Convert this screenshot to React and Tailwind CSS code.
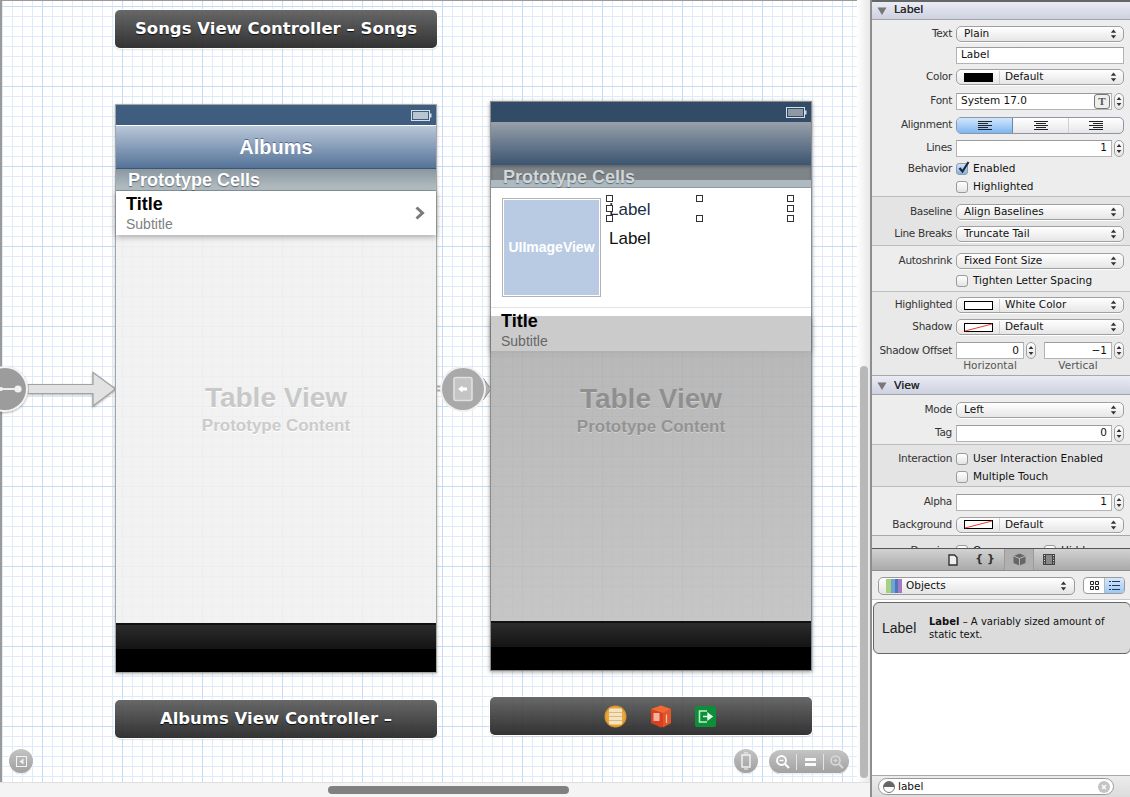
import React from 'react';

const lucida = "font-['DejaVu_Sans',sans-serif]";
const helv = "font-['Liberation_Sans',Arial,sans-serif]";

/* ── Small inspector controls ───────────────────────────── */
const UpDown = () => (
  <svg width="7" height="10" viewBox="0 0 7 10" className="shrink-0">
    <path d="M3.5 0.5 L6.2 3.8 H0.8 Z" fill="#333" />
    <path d="M3.5 9.5 L6.2 6.2 H0.8 Z" fill="#333" />
  </svg>
);

const Select = ({ children, className = 'w-[168px]' }) => (
  <div className={`${className} h-[16px] flex items-center pl-[7px] pr-[6px] rounded-[5px] border border-[#a0a0a0] bg-gradient-to-b from-white to-[#e6e6e6] shadow-[0_1px_0_#fff] text-[#111]`}>
    <div className="flex-1 flex items-center min-w-0 whitespace-nowrap">{children}</div>
    <UpDown />
  </div>
);

const Swatch = ({ kind }) => (
  <svg width="29" height="9" viewBox="0 0 29 9" className="shrink-0 mr-[6px]">
    {kind === 'black' && <rect width="29" height="9" fill="#000" />}
    {kind !== 'black' && <rect x="0.5" y="0.5" width="28" height="8" fill="#fff" stroke="#000" />}
    {kind === 'none' && <line x1="1" y1="8" x2="28" y2="1" stroke="#f03a2e" strokeWidth="1" />}
  </svg>
);

const ColorSelect = ({ kind, label }) => (
  <Select>
    <Swatch kind={kind} />
    <span className="w-px h-[13px] bg-[#cfcfcf] mr-[5px]" />
    {label}
  </Select>
);

const Stepper = () => (
  <div className="w-[10px] h-[17px] ml-[2px] rounded-[5px] border border-[#a0a0a0] bg-gradient-to-b from-white to-[#e6e6e6] flex items-center justify-center shrink-0">
    <svg width="6" height="11" viewBox="0 0 6 11">
      <path d="M3 1 L5.4 4 H0.6 Z" fill="#333" />
      <path d="M3 10 L5.4 7 H0.6 Z" fill="#333" />
    </svg>
  </div>
);

const Field = ({ children, right, className = 'w-[156px]' }) => (
  <div className={`${className} h-[17px] flex items-center px-[4px] bg-white border border-[#b4b4b4] border-t-[#9c9c9c] text-[#111] ${right ? 'justify-end' : ''}`}>
    {children}
  </div>
);

const Check = ({ checked, label, className = '' }) => (
  <div className={`flex items-center gap-[5px] ${className}`}>
    <div className={`relative w-[12px] h-[12px] rounded-[3px] border border-[#9a9a9a] ${checked ? 'bg-gradient-to-b from-[#cfe3fa] to-[#7fb2ec]' : 'bg-gradient-to-b from-white to-[#e4e4e4]'}`}>
      {checked && (
        <svg width="14" height="14" viewBox="0 0 14 14" className="absolute left-[0px] top-[-4px]">
          <path d="M2.5 8 L5.5 11.5 L11.5 2" fill="none" stroke="#1a2a3c" strokeWidth="2.2" />
        </svg>
      )}
    </div>
    <span className="text-[#111]">{label}</span>
  </div>
);

const Row = ({ label, className, children }) => (
  <div className={`flex items-center ${className}`}>
    <div className="w-[80px] mr-[4px] text-right text-[#333] whitespace-nowrap shrink-0 tracking-[-0.3px] flex justify-end">{label}</div>
    {children}
  </div>
);

const AlignIcon = ({ mode }) => {
  const short = mode === 'left' ? 'M0 2.5h10M0 6.5h10' : mode === 'center' ? 'M2 2.5h10M2 6.5h10' : 'M4 2.5h10M4 6.5h10';
  return (
    <svg width="14" height="9" viewBox="0 0 14 9">
      <path d="M0 0.5h14M0 4.5h14M0 8.5h14" stroke="#222" strokeWidth="1" />
      <path d={short} stroke="#222" strokeWidth="1" />
    </svg>
  );
};

const SectionHeader = ({ title, className }) => (
  <div className={`flex items-center gap-[7px] pl-[5px] bg-gradient-to-b from-[#eaecf5] to-[#cdd1e0] border-b border-[#a4a4a4] ${className}`}>
    <svg width="10" height="8" viewBox="0 0 10 8"><path d="M0.5 0.5 H9.5 L5 8 Z" fill="#777" /></svg>
    <span className="text-[#2a2a2a] text-[11px] tracking-[-0.1px] [text-shadow:0_0_0.4px_#333]">{title}</span>
  </div>
);

/* ── Inspector pane ─────────────────────────────────────── */
const Inspector = () => (
  <div className={`${lucida} w-[260px] h-[797px] shrink-0 flex flex-col text-[10.5px] border-l-2 border-[#8e8e8e] bg-[#ededed]`}>
    <div className="h-[548px] overflow-hidden border-t-2 border-[#666] shrink-0">
      <SectionHeader title="Label" className="h-[18px]" />

      <div className="pt-[4px] h-[177px] border-b border-[#bdbdbd] bg-[#ededed]">
        <Row label="Text" className="h-[20px]"><Select>Plain</Select></Row>
        <Row label="" className="h-[21px]"><div className="mt-px"><Field className="w-[168px]">Label</Field></div></Row>
        <Row label="Color" className="h-[24px]"><ColorSelect kind="black" label="Default" /></Row>
        <Row label="Font" className="h-[24px]">
          <Field className="w-[156px]">
            <span className="flex-1">System 17.0</span>
            <span className="w-[16px] h-[15px] -mr-[3px] rounded-[3px] border border-[#777] bg-[#eee] flex items-center justify-center font-['Liberation_Serif',serif] font-bold text-[11px] text-[#555]">T</span>
          </Field>
          <Stepper />
        </Row>
        <Row label="Alignment" className="h-[24px]">
          <div className="w-[168px] h-[17px] flex rounded-[5px] border border-[#8c96a8] overflow-hidden bg-gradient-to-b from-white to-[#e6e6e6]">
            <div className="w-[56px] flex items-center justify-center bg-gradient-to-b from-[#d3e6fb] to-[#7db6f0] border-r border-[#6a86ad]"><AlignIcon mode="left" /></div>
            <div className="w-[56px] flex items-center justify-center border-r border-[#d0d0d0]"><AlignIcon mode="center" /></div>
            <div className="flex-1 flex items-center justify-center"><AlignIcon mode="right" /></div>
          </div>
        </Row>
        <Row label="Lines" className="h-[22px]"><Field right>1</Field><Stepper /></Row>
        <Row label="Behavior" className="h-[20px]"><Check checked label="Enabled" /></Row>
        <Row label="" className="h-[16px]"><Check label="Highlighted" /></Row>
      </div>

      <div className="pt-[4px] h-[49px] border-b border-[#bdbdbd] bg-[#e4e4e4]">
        <Row label="Baseline" className="h-[22px]"><Select>Align Baselines</Select></Row>
        <Row label="Line Breaks" className="h-[22px]"><Select>Truncate Tail</Select></Row>
      </div>

      <div className="pt-[4px] h-[46px] border-b border-[#bdbdbd] bg-[#ededed]">
        <Row label="Autoshrink" className="h-[22px]"><Select>Fixed Font Size</Select></Row>
        <Row label="" className="h-[18px]"><Check label="Tighten Letter Spacing" /></Row>
      </div>

      <div className="pt-[2px] h-[84px] border-b border-[#a8a8a8] bg-[#e9e9e9]">
        <Row label="Highlighted" className="h-[22px]"><ColorSelect kind="white" label="White Color" /></Row>
        <Row label="Shadow" className="h-[22px]"><ColorSelect kind="none" label="Default" /></Row>
        <Row label="Shadow Offset" className="h-[21px] mt-[2px]">
          <Field right className="w-[68px]">0</Field><Stepper />
          <div className="w-[8px]" />
          <Field right className="w-[68px]">−1</Field><Stepper />
        </Row>
        <div className="flex h-[12px] -mt-px items-center text-[#555] pl-[84px]">
          <div className="w-[68px] text-center">Horizontal</div>
          <div className="w-[20px]" />
          <div className="w-[68px] text-center">Vertical</div>
        </div>
      </div>

      <SectionHeader title="View" className="h-[19px] pt-[2px]" />

      <div className="pt-[4px] h-[50px] border-b border-[#bdbdbd] bg-[#ededed]">
        <Row label="Mode" className="h-[22px]"><Select>Left</Select></Row>
        <Row label="Tag" className="h-[24px]"><Field right>0</Field><Stepper /></Row>
      </div>

      <div className="pt-[4px] h-[42px] border-b border-[#bdbdbd] bg-[#e4e4e4]">
        <Row label="Interaction" className="h-[19px]"><Check label="User Interaction Enabled" /></Row>
        <Row label="" className="h-[18px]"><Check label="Multiple Touch" /></Row>
      </div>

      <div className="pt-[4px] h-[49px] border-b border-[#a8a8a8] bg-[#ededed]">
        <Row label="Alpha" className="h-[22px]"><Field right>1</Field><Stepper /></Row>
        <Row label="Background" className="h-[23px]"><ColorSelect kind="none" label="Default" /></Row>
      </div>

      <div className="pt-[5px] bg-[#e4e4e4]">
        <Row label="Drawing" className="h-[20px]">
          <Check label="Opaque" className="w-[88px]" />
          <Check label="Hidden" />
        </Row>
      </div>
    </div>

    {/* Library tabs */}
    <div className="h-[23px] shrink-0 border-t border-[#555] bg-gradient-to-b from-[#d2d2d2] to-[#aaaaaa] border-b border-b-[#8f8f8f] flex items-center">
      <div className="w-[90px] flex justify-end pr-[4px]">
        <svg width="10" height="12" viewBox="0 0 10 12"><path d="M1 1 H6.5 L9 3.5 V11 H1 Z" fill="#eee" stroke="#333" strokeWidth="1.4" /></svg>
      </div>
      <div className="w-[42px] pl-[4px] text-center font-bold text-[#333] text-[11px]">{'{ }'}</div>
      <div className="w-[30px] h-[21px] flex items-center justify-center bg-[#b0b0b0] border-x border-[#9a9a9a]">
        <svg width="13" height="13" viewBox="0 0 13 13">
          <path d="M6.5 0.5 L12.5 3 V10 L6.5 12.5 L0.5 10 V3 Z" fill="#666" />
          <path d="M0.5 3 L6.5 5.5 L12.5 3 M6.5 5.5 V12.5" fill="none" stroke="#ccc" strokeWidth="0.8" />
        </svg>
      </div>
      <div className="pl-[9px]">
        <svg width="12" height="11" viewBox="0 0 12 11">
          <rect width="12" height="11" fill="#444" />
          <rect x="3" y="1" width="6" height="9" fill="#888" />
          <path d="M1 1.5h1M1 4h1M1 6.5h1M1 9h1M10 1.5h1M10 4h1M10 6.5h1M10 9h1" stroke="#ddd" />
        </svg>
      </div>
    </div>

    <div className="h-[29px] shrink-0 flex items-center pl-[6px] pt-px border-b border-[#c8c8c8] bg-[#ededed]">
      <div className="w-[197px] h-[18px] flex items-center pl-[7px] pr-[7px] rounded-[5px] border border-[#9a9a9a] bg-gradient-to-b from-white to-[#e4e4e4] text-[#111]">
        <svg width="16" height="14" viewBox="0 0 16 14" className="mr-[4px] shrink-0">
          <rect x="0" y="0" width="5" height="14" fill="#a7d27c" />
          <rect x="5" y="0" width="4" height="14" fill="#6ea4d6" />
          <rect x="9" y="0" width="3" height="14" fill="#4d78b8" />
          <rect x="12" y="0" width="4" height="14" fill="#a878c8" />
        </svg>
        <span className="flex-1">Objects</span>
        <UpDown />
      </div>
      <div className="ml-[8px] w-[42px] h-[17px] flex rounded-[4px] border border-[#9a9a9a] overflow-hidden bg-white">
        <div className="w-[21px] flex items-center justify-center border-r border-[#b8b8b8]">
          <svg width="9" height="9" viewBox="0 0 9 9">
            <path d="M0.5 0.5h3v3h-3zM5.5 0.5h3v3h-3zM0.5 5.5h3v3h-3zM5.5 5.5h3v3h-3z" fill="none" stroke="#222" />
          </svg>
        </div>
        <div className="flex-1 flex items-center justify-center bg-gradient-to-b from-[#d6e8fb] to-[#9cc8f4]">
          <svg width="11" height="9" viewBox="0 0 11 9">
            <path d="M0 0.5h2M3 0.5h8M0 4.5h2M3 4.5h8M0 8.5h2M3 8.5h8" stroke="#1f3a5c" />
          </svg>
        </div>
      </div>
    </div>

    <div className="flex-1 bg-white pt-[2px] pl-[1px]">
      <div className="h-[52px] flex items-center rounded-[6px] border border-[#666] bg-[#dcdcdc] -mr-px">
        <div className={`${helv} w-[55px] pl-[8px] text-[14px] text-[#222]`}>Label</div>
        <div className="text-[10px] leading-[13px] text-[#111] w-[185px]"><b>Label</b> – A variably sized amount of static text.</div>
      </div>
    </div>

    <div className="h-[22px] shrink-0 border-t border-[#a8a8a8] bg-gradient-to-b from-[#ececec] to-[#dcdcdc] flex items-center pl-[6px]">
      <div className="w-[236px] h-[17px] flex items-center pl-[4px] pr-[3px] pt-px rounded-full border border-[#9a9a9a] bg-white text-[#111]">
        <svg width="12" height="12" viewBox="0 0 12 12" className="mr-[3px]">
          <circle cx="6" cy="6" r="5.5" fill="#fff" stroke="#777" />
          <path d="M0.5 6 A5.5 5.5 0 0 1 11.5 6 Z" fill="#666" />
        </svg>
        <span className="flex-1">label</span>
        <svg width="12" height="12" viewBox="0 0 12 12">
          <circle cx="6" cy="6" r="6" fill="#c4c4c4" />
          <path d="M4 4 L8 8 M8 4 L4 8" stroke="#fff" strokeWidth="1.4" />
        </svg>
      </div>
    </div>
  </div>
);

/* ── Storyboard pieces ──────────────────────────────────── */
const Battery = ({ fill }) => (
  <svg width="21" height="11" viewBox="0 0 21 11" className="shrink-0">
    <rect x="0.5" y="0.5" width="18" height="10" fill="none" stroke="#d8dee6" />
    <rect x="2" y="2" width="15" height="7" fill={fill} />
    <rect x="19" y="3.5" width="1.5" height="4" fill="#d8dee6" />
  </svg>
);

const TitleBar = ({ className, children }) => (
  <div className={`absolute ${className} h-[38px] rounded-[5px] bg-gradient-to-b from-[rgba(88,88,88,0.9)] to-[rgba(34,34,34,0.92)] shadow-[0_0_0_1px_#fff,0_1px_2px_rgba(0,0,0,0.35)] flex items-center justify-center`}>
    {children}
  </div>
);

const barTitle = `${lucida} font-bold text-white text-[16.5px] pt-px [text-shadow:0_1px_1px_rgba(0,0,0,0.8)] whitespace-nowrap`;

const Handle = ({ className }) => (
  <div className={`absolute ${className} w-[7px] h-[7px] border border-[#333] bg-white`} />
);

const TabBar = () => (
  <div className="h-[49px] shrink-0 bg-black border-t-2 border-[#111]">
    <div className="h-[24px] bg-gradient-to-b from-[#2c2c2c] to-[#141414]" />
  </div>
);

const AlbumsScene = () => (
  <div className={`${helv} absolute left-[115px] top-[104px] w-[322px] h-[569px] flex flex-col border border-[#a6a6a6] shadow-[0_1px_3px_rgba(0,0,0,0.25)]`}>
    <div className="h-[20px] shrink-0 flex items-center justify-end pr-[4px] bg-[#3f5e7f]"><Battery fill="#b9c5d3" /></div>
    <div className="h-[44px] shrink-0 border-t border-white bg-gradient-to-b from-[#bac8d9] to-[#557398] border-b border-b-[#3d5674] flex items-center justify-center">
      <span className="text-white font-bold text-[20px] [text-shadow:0_-1px_0_rgba(40,60,90,0.6)]">Albums</span>
    </div>
    <div className="h-[22px] shrink-0 flex items-center pl-[12px] pt-[2px] bg-gradient-to-b from-[#8b979f] to-[#b6c1c6] border-b border-[#8b97a2]">
      <span className="text-white font-bold text-[18px] [text-shadow:0_1px_1px_rgba(60,70,80,0.7)]">Prototype Cells</span>
    </div>
    <div className="relative h-[44px] shrink-0 bg-white shadow-[0_2px_6px_rgba(0,0,0,0.3)] flex pl-[10px] pr-[11px] pt-[3px]">
      <div className="flex-1">
        <div className="text-[18px] leading-[21px] font-bold text-black">Title</div>
        <div className="text-[14px] leading-[17px] text-[#808080] mt-[1px]">Subtitle</div>
      </div>
      <svg width="10" height="14" viewBox="0 0 10 14" className="self-center -mt-[3px]">
        <path d="M1.5 1.5 L7.5 7 L1.5 12.5" fill="none" stroke="#7a7a7a" strokeWidth="3" />
      </svg>
    </div>
    <div className="flex-1 bg-[rgba(240,240,240,0.86)] pt-[146px] text-center">
      <div className="text-[28px] leading-[34px] font-bold text-[#c8c8c8] [text-shadow:0_1px_0_#fff]">Table View</div>
      <div className="text-[17px] leading-[20px] mt-px font-bold text-[#cbcbcb] [text-shadow:0_1px_0_#fff]">Prototype Content</div>
    </div>
    <TabBar />
  </div>
);

const SongsScene = () => (
  <div className={`${helv} absolute left-[490px] top-[101px] w-[322px] h-[570px] flex flex-col border border-[#8c8c8c] shadow-[0_1px_4px_rgba(0,0,0,0.4)]`}>
    <div className="h-[20px] shrink-0 flex items-center justify-end pr-[4px] bg-[#324c68]"><Battery fill="#8f9aa6" /></div>
    <div className="h-[43px] shrink-0 bg-gradient-to-b from-[#99a1ab] to-[#3c5571]" />
    <div className="relative h-[23px] shrink-0 bg-[#7e8589] shadow-[inset_0_2px_3px_rgba(0,0,0,0.25)] border-b border-[#8f9ba4]">
      <div className="absolute left-0 right-0 bottom-0 h-[7px] bg-[#adbbc1]" />
      <span className="absolute left-[12px] top-[2px] text-[#d2d6d8] font-bold text-[18px] leading-[21px] whitespace-nowrap [text-shadow:0_1px_1px_rgba(60,70,80,0.7)]">Prototype Cells</span>
    </div>
    <div className="relative h-[128px] shrink-0 bg-white pl-[12px] pt-[11px] flex">
      <div className="w-[97px] h-[97px] shrink-0 flex items-center justify-center bg-[#b8cbe3] border border-white shadow-[0_0_0_1px_#b4b4b4] text-white font-bold text-[14px]">UIImageView</div>
      <div className="ml-[9px] mt-px text-[17px] leading-[20px]">
        <div className="text-[#1b2d48]">Label</div>
        <div className="mt-[9px] text-[#111]">Label</div>
      </div>
      <div className="absolute left-0 right-0 top-[119px] h-px bg-[#e2e2e2]" />
      <Handle className="left-[115px] top-[7px]" />
      <Handle className="left-[205px] top-[7px]" />
      <Handle className="left-[296px] top-[7px]" />
      <Handle className="left-[115px] top-[17px] bg-transparent" />
      <Handle className="left-[296px] top-[17px]" />
      <Handle className="left-[115px] top-[27px]" />
      <Handle className="left-[205px] top-[27px]" />
      <Handle className="left-[296px] top-[27px]" />
    </div>
    <div className="h-[35px] shrink-0 bg-[#cbcbcb] pl-[10px] shadow-[0_2px_6px_rgba(0,0,0,0.3)]">
      <div className="relative -top-[5px] text-[18px] leading-[21px] font-bold text-black">Title</div>
      <div className="relative -top-[4px] text-[14px] leading-[17px] text-[#666]">Subtitle</div>
    </div>
    <div className="flex-1 bg-gradient-to-b from-[rgba(172,172,172,0.85)] to-[rgba(190,190,190,0.88)] pt-[31px] text-center">
      <div className="text-[28px] leading-[34px] font-bold text-[#8f8f8f] [text-shadow:0_1px_0_#d0d0d0]">Table View</div>
      <div className="text-[17px] leading-[20px] mt-px font-bold text-[#939393] [text-shadow:0_1px_0_#d0d0d0]">Prototype Content</div>
    </div>
    <TabBar />
  </div>
);

const SegueArrow = () => (
  <svg width="118" height="50" viewBox="0 0 118 50" className="absolute left-0 top-[364px] drop-shadow-[0_1px_1px_rgba(0,0,0,0.3)]">
    <path d="M28 20.5 H93 V8.5 L115.5 25 L93 42 V29.5 H28 Z" fill="#e2e2e2" stroke="#a2a2a2" strokeWidth="1.2" />
    <circle cx="5" cy="25" r="23" fill="#f4f4f4" />
    <circle cx="5" cy="25" r="21" fill="#9c9c9c" />
    <path d="M0 25 H16" stroke="#eee" strokeWidth="2" />
    <circle cx="18" cy="25" r="3.6" fill="#f2f2f2" />
    <circle cx="1" cy="25" r="2" fill="#f2f2f2" />
  </svg>
);

const SegueCircle = () => (
  <svg width="56" height="50" viewBox="0 0 56 50" className="absolute left-[437px] top-[364px]">
    <path d="M0 22.5 H6 M0 26.5 H6" stroke="#a8a8a8" strokeWidth="2" />
    <path d="M46 14 L54 25 L46 36" fill="#b0b0b0" stroke="#8c8c8c" />
    <circle cx="26" cy="25" r="23" fill="#f0f0f0" />
    <circle cx="26" cy="25" r="21" fill="#a9a9a9" />
    <rect x="17" y="13.5" width="18" height="23" rx="2" fill="#c4c4c4" stroke="#e0e0e0" strokeWidth="1.6" />
    <path d="M21 25 L25.5 21.5 V23.5 H30 V26.5 H25.5 V28.5 Z" fill="#fff" />
  </svg>
);

const DockIcons = () => (
  <div className="flex items-center gap-[23px] ml-[18px]">
    <svg width="23" height="23" viewBox="0 0 23 23">
      <circle cx="11.5" cy="11.5" r="11" fill="#d9962d" />
      <circle cx="11.5" cy="11.5" r="9.5" fill="#e8a83e" />
      <rect x="5" y="3.5" width="13" height="16" rx="1" fill="#f4e3bd" />
      <path d="M5 7.5h13M5 11.5h13M5 15.5h13" stroke="#d6b98a" />
    </svg>
    <svg width="22" height="23" viewBox="0 0 22 23">
      <path d="M11 0.5 L21 4 V18 L11 22.5 L1 18 V4 Z" fill="#d8401e" />
      <path d="M1 4 L11 0.5 L21 4 L13 8 Z" fill="#ee6a35" />
      <path d="M13 8 L21 4 V18 L13 22.5 Z" fill="#e0562a" />
      <rect x="3.5" y="8" width="6" height="8" fill="#f3b2a2" />
      <path d="M16.5 9.5 V18" stroke="#f7c9b4" strokeWidth="1.2" />
    </svg>
    <svg width="21" height="21" viewBox="0 0 21 21">
      <rect width="21" height="21" rx="2" fill="#0d8f3a" />
      <path d="M12 5 H4.5 V16 H12" fill="none" stroke="#bdf0c8" strokeWidth="1.6" />
      <path d="M8 10.5 H15 M13 7.5 L17 10.5 L13 13.5 Z" fill="#dff8e4" stroke="#dff8e4" strokeWidth="1.4" />
    </svg>
  </div>
);

const roundBtn = 'absolute rounded-full bg-gradient-to-b from-[#c4c4c4] to-[#a0a0a0] shadow-[0_0_0_1px_rgba(255,255,255,0.8),0_1px_1px_rgba(0,0,0,0.3)] flex items-center justify-center';

const Canvas = () => (
  <div className="w-[870px] h-[797px] shrink-0 flex flex-col bg-[#f4f4f4]">
    <div className="flex h-[782px] shrink-0">
      <div className="relative w-[857px] overflow-hidden bg-white bg-[linear-gradient(to_right,#c6dcf6_1px,transparent_1px),linear-gradient(to_bottom,#c6dcf6_1px,transparent_1px),linear-gradient(to_right,#e0ebf9_1px,transparent_1px),linear-gradient(to_bottom,#e0ebf9_1px,transparent_1px)] bg-[size:80px_80px,80px_80px,10px_10px,10px_10px] bg-[position:42px_6px,42px_6px,2px_6px,2px_6px] shadow-[inset_2px_1px_0_#9a9a9a]">
        <TitleBar className="left-[115px] top-[10px] w-[322px]"><span className={barTitle}>Songs View Controller – Songs</span></TitleBar>
        <SegueArrow />
        <AlbumsScene />
        <SongsScene />
        <SegueCircle />
        <TitleBar className="left-[115px] top-[700px] w-[322px]"><span className={barTitle}>Albums View Controller –</span></TitleBar>
        <TitleBar className="left-[490px] top-[697px] w-[322px]"><DockIcons /></TitleBar>

        <div className={`${roundBtn} left-[9px] top-[749px] w-[24px] h-[24px]`}>
          <svg width="11" height="11" viewBox="0 0 11 11">
            <rect x="0.5" y="0.5" width="10" height="10" fill="none" stroke="#f2f2f2" />
            <path d="M7.5 2.5 V8.5 L3.5 5.5 Z" fill="#f2f2f2" />
          </svg>
        </div>
        <div className={`${roundBtn} left-[734px] top-[749px] w-[24px] h-[24px]`}>
          <svg width="10" height="18" viewBox="0 0 10 18">
            <rect x="1" y="3" width="8" height="12" fill="none" stroke="#f4f4f4" strokeWidth="1.4" />
            <path d="M3 1h4M3 17h4" stroke="#f4f4f4" />
          </svg>
        </div>
        <div className="absolute left-[769px] top-[750px] w-[80px] h-[23px] rounded-full bg-gradient-to-b from-[#c4c4c4] to-[#a2a2a2] shadow-[0_0_0_1px_rgba(255,255,255,0.8),0_1px_1px_rgba(0,0,0,0.3)] flex items-center">
          <div className="w-[27px] flex justify-center">
            <svg width="14" height="14" viewBox="0 0 14 14">
              <circle cx="5.5" cy="5.5" r="4.5" fill="none" stroke="#fff" strokeWidth="1.8" />
              <path d="M3.5 5.5h4" stroke="#fff" strokeWidth="1.4" />
              <path d="M9 9 L13 13" stroke="#fff" strokeWidth="2.2" />
            </svg>
          </div>
          <div className="w-px h-[16px] bg-[#e4e4e4]" />
          <div className="w-[26px] flex justify-center">
            <div className="w-[11px] h-[8px] border-y-[3px] border-[#fafafa]" />
          </div>
          <div className="w-px h-[16px] bg-[#e4e4e4]" />
          <div className="flex-1 flex justify-center">
            <svg width="14" height="14" viewBox="0 0 14 14">
              <circle cx="5.5" cy="5.5" r="4.5" fill="none" stroke="#d8d8d8" strokeWidth="1.6" />
              <path d="M3.5 5.5h4M5.5 3.5v4" stroke="#d8d8d8" strokeWidth="1.2" />
              <path d="M9 9 L13 13" stroke="#d8d8d8" strokeWidth="2" />
            </svg>
          </div>
        </div>
      </div>
      {/* vertical scroller */}
      <div className="w-[13px] pl-[3px] pt-[366px] bg-gradient-to-r from-white to-[#e8e8e8]">
        <div className="w-[8px] h-[412px] rounded-full bg-[#b8b8b8]" />
      </div>
    </div>
    {/* horizontal scroller */}
    <div className="flex-1 pl-[328px] pt-[3px] border-t border-[#e0e0e0]">
      <div className="w-[241px] h-[8px] rounded-full bg-[#808080]" />
    </div>
  </div>
);

const App = () => (
  <div className="w-[1130px] h-[797px] flex overflow-hidden bg-white">
    <Canvas />
    <Inspector />
  </div>
);

export default App;
